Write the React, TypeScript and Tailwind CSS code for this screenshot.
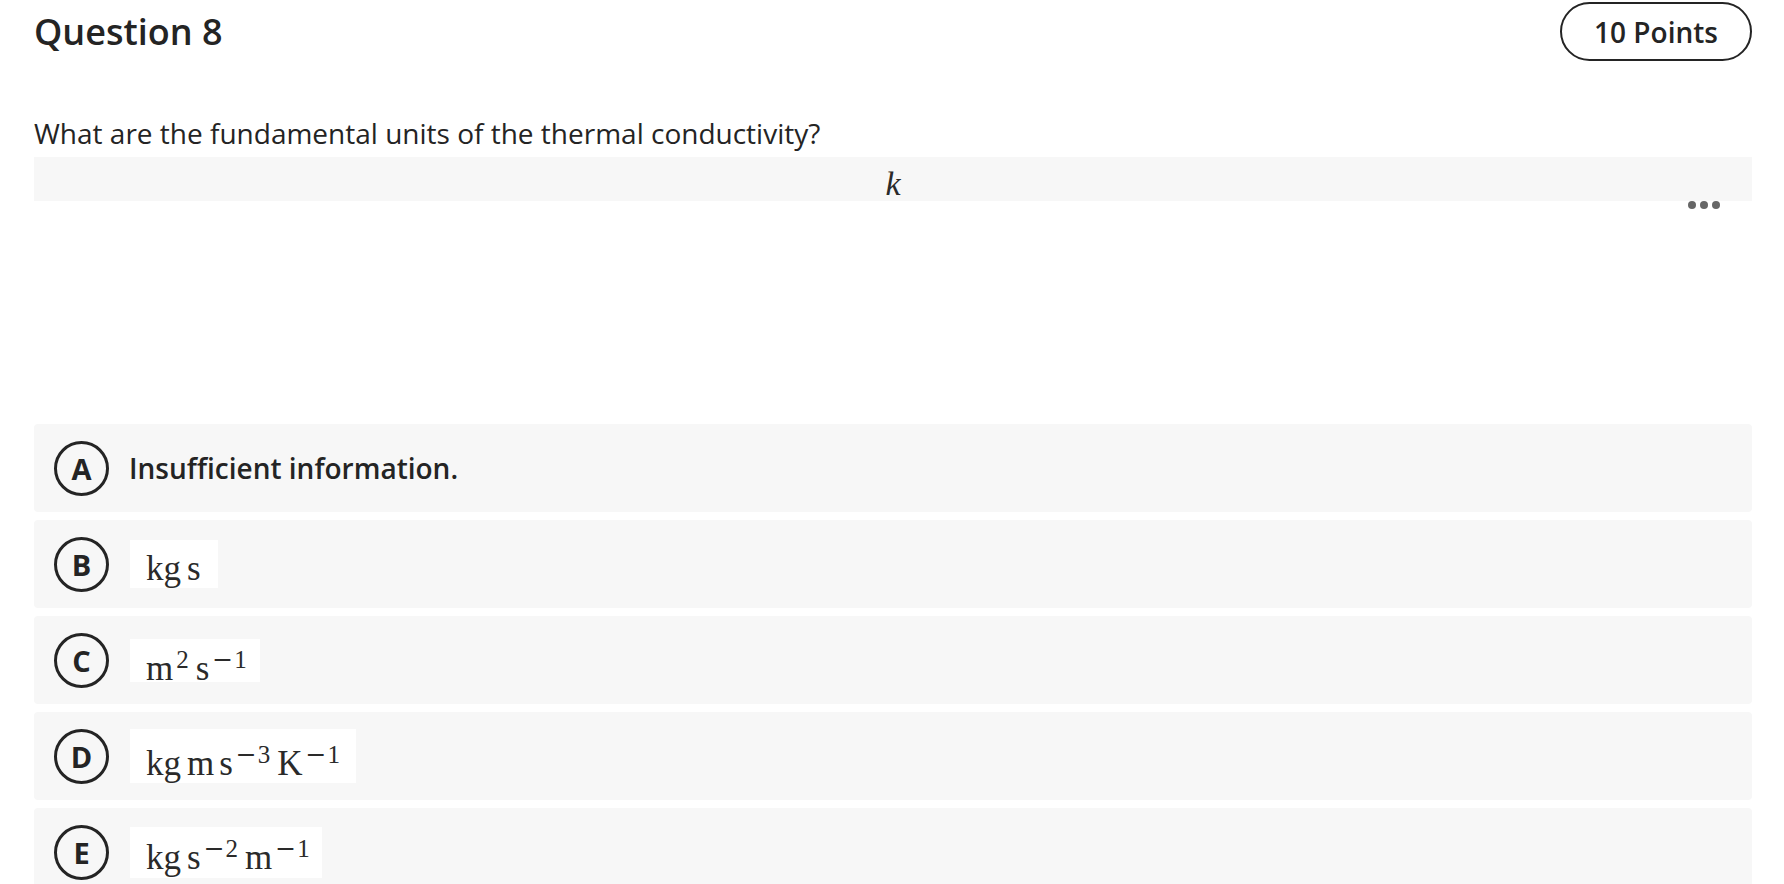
import React from "react";

const sans = "font-['Open_Sans',sans-serif]";
const serif = "font-['Liberation_Serif','Times_New_Roman',serif]";

function Sup({ children, minus = true }: { children: React.ReactNode; minus?: boolean }) {
  return (
    <span className="ml-[3px] text-[25px] leading-[0] align-[12px]">
      {minus && <span className="mr-[1px] font-['DejaVu_Serif',serif] text-[25px]">−</span>}
      {children}
    </span>
  );
}

function Circle({ letter }: { letter: string }) {
  return (
    <div className="flex h-[55px] w-[55px] shrink-0 items-center justify-center rounded-full border-[3px] border-[#242424] text-[29px] font-bold leading-none text-[#242424]">
      {letter}
    </div>
  );
}

function MathBox({
  w,
  h,
  pt,
  children,
}: {
  w: string;
  h: string;
  pt: string;
  children: React.ReactNode;
}) {
  return (
    <div className={`ml-[21px] bg-white pl-[16px] ${w} ${h} ${pt}`}>
      <div className={`${serif} whitespace-nowrap text-[35px] leading-[35px] text-[#2a2a2a]`}>{children}</div>
    </div>
  );
}

function Option({ letter, children }: { letter: string; children: React.ReactNode }) {
  return (
    <div className="flex h-[88px] items-center rounded-[4px] bg-[#f7f7f7] pl-[20px]">
      <Circle letter={letter} />
      {children}
    </div>
  );
}

export default function App() {
  return (
    <div className={`${sans} min-h-screen bg-white pl-[34px] pr-[32px] pt-[2px] text-[#242424]`}>
      <div className="flex h-[59px] items-center justify-between">
        <h1 className="text-[36px] font-semibold leading-none">Question 8</h1>
        <div className="flex h-[59px] w-[192px] items-center justify-center rounded-full border-2 border-[#242424] text-[28px] font-semibold leading-none">
          10 Points
        </div>
      </div>

      <p className="mb-[5px] mt-[54px] text-[28px] leading-[37px]">
        What are the fundamental units of the thermal conductivity?
      </p>

      <div className="flex h-[44px] justify-center bg-[#f7f7f7] pt-[10px]">
        <span className={`${serif} text-[34px] italic leading-[34px] text-[#2a2a2a]`}>k</span>
      </div>

      <div className="flex justify-end gap-[4px] pr-[32px]">
        <span className="h-[8px] w-[8px] rounded-full bg-[#666666]" />
        <span className="h-[8px] w-[8px] rounded-full bg-[#666666]" />
        <span className="h-[8px] w-[8px] rounded-full bg-[#666666]" />
      </div>

      <div className="mt-[215px] flex flex-col gap-[8px] pb-4">
        <Option letter="A">
          <span className="ml-[20px] text-[28px] font-semibold leading-none">Insufficient information.</span>
        </Option>
        <Option letter="B">
          <MathBox w="w-[88px]" h="h-[48px]" pt="pt-[11px]">
            kg<span className="ml-[6px]">s</span>
          </MathBox>
        </Option>
        <Option letter="C">
          <MathBox w="w-[130px]" h="h-[43px]" pt="pt-[12px]">
            m
            <Sup minus={false}>2</Sup>
            <span className="ml-[7px]">s</span>
            <Sup>1</Sup>
          </MathBox>
        </Option>
        <Option letter="D">
          <MathBox w="w-[226px]" h="h-[54px]" pt="pt-[17px]">
            kg<span className="ml-[6px]">m</span>
            <span className="ml-[5px]">s</span>
            <Sup>3</Sup>
            <span className="ml-[7px]">K</span>
            <Sup>1</Sup>
          </MathBox>
        </Option>
        <Option letter="E">
          <MathBox w="w-[192px]" h="h-[51px]" pt="pt-[13px]">
            kg<span className="ml-[6px]">s</span>
            <Sup>2</Sup>
            <span className="ml-[7px]">m</span>
            <Sup>1</Sup>
          </MathBox>
        </Option>
      </div>
    </div>
  );
}
